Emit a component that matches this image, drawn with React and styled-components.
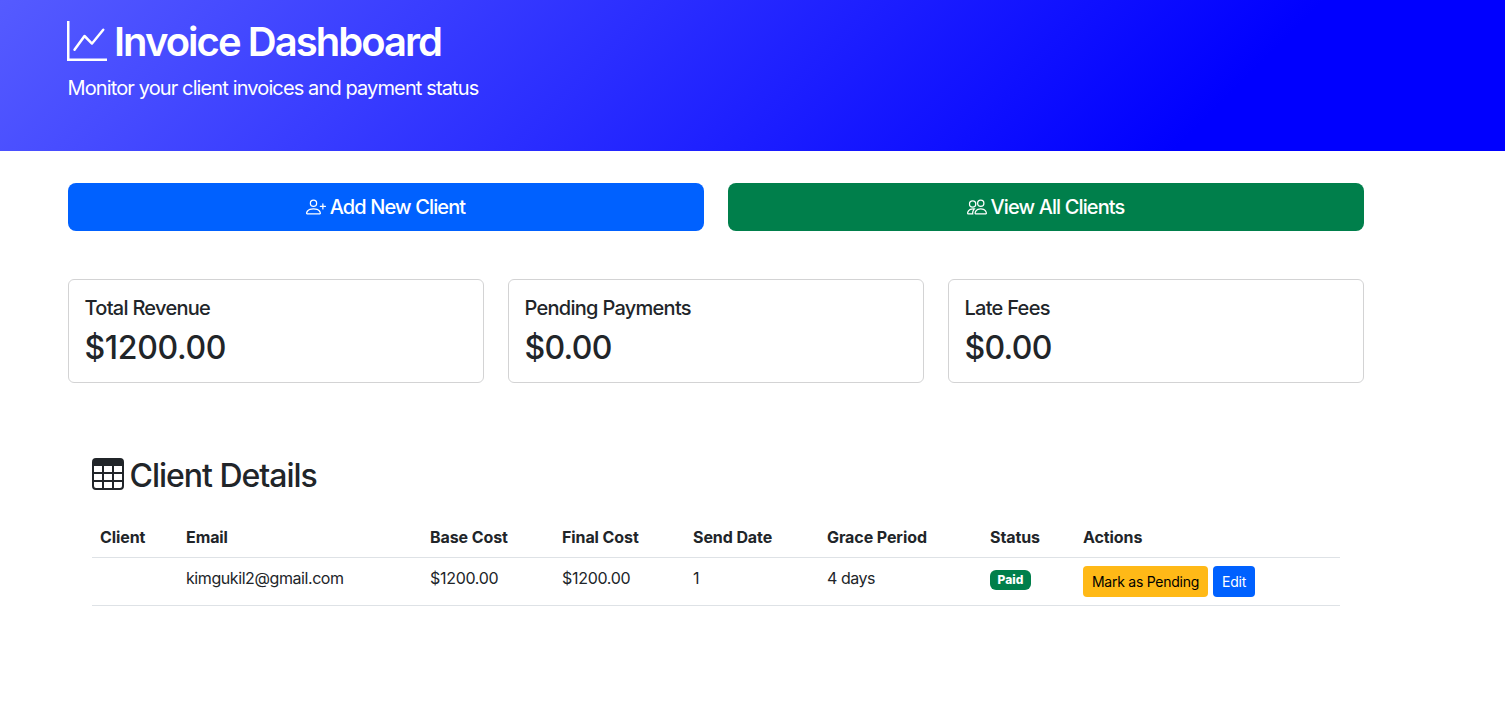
import React from "react";
import styled, { createGlobalStyle } from "styled-components";
import { BsGraphUp, BsPersonPlus, BsPeople, BsTable } from "react-icons/bs";

const GlobalStyle = createGlobalStyle`
  *, *::before, *::after { box-sizing: border-box; }
  body {
    margin: 0;
    background: #fff;
    color: #212529;
    font-family: Inter, "Liberation Sans", sans-serif;
    font-size: 16px;
    line-height: 1.5;
    overflow: hidden;
    font-kerning: normal;
  }
  h1, h2, h5, p { margin: 0; }
  svg { flex: none; }
`;

const Container = styled.div`
  width: 1296px;
  margin-left: 68px;
`;

const Header = styled.header`
  height: 151px;
  padding-top: 17px;
  color: #fff;
  background: linear-gradient(135deg, #555bff 0%, #0000ff 80%);
`;

const Title = styled.h1`
  display: flex;
  align-items: center;
  height: 48px;
  margin-bottom: 8px;
  font-size: 40px;
  font-weight: 570;
  letter-spacing: -1.97px;
  line-height: 48px;

  svg { margin: 0 7px 0 -1px; }
  span { padding-top: 2px; }
`;

const Lead = styled.p`
  margin-left: -0.5px;
  font-size: 20px;
  line-height: 30px;
  letter-spacing: -0.88px;
`;

const ButtonRow = styled.div`
  display: grid;
  grid-template-columns: 1fr 1fr;
  gap: 24px;
  margin-top: 32px;
`;

const LargeButton = styled.button`
  display: flex;
  align-items: center;
  justify-content: center;
  gap: 4px;
  height: 48px;
  padding: 0 1px 0 0;
  border: 0;
  border-radius: 8px;
  background: ${({ $color }) => $color};
  color: #fff;
  font: 550 20px/30px Inter, sans-serif;
  letter-spacing: -0.88px;
`;

const Cards = styled.div`
  display: grid;
  grid-template-columns: repeat(3, 1fr);
  gap: 24px;
  margin-top: 48px;
`;

const Card = styled.section`
  height: 104px;
  padding: 16px 16px 16px 15.5px;
  border: 1px solid #d3d3d4;
  border-radius: 6px;
`;

const CardTitle = styled.h5`
  margin-bottom: 9px;
  font-size: 20px;
  font-weight: 530;
  line-height: 24px;
  letter-spacing: -0.72px;
`;

const Amount = styled.h2`
  font-size: 32px;
  font-weight: 550;
  line-height: 38px;
  letter-spacing: ${({ $tracking }) => $tracking}px;
`;

const Details = styled.section`
  margin-top: 72px;
  padding: 0 24px;
`;

const DetailsTitle = styled.h2`
  display: flex;
  align-items: center;
  gap: 6px;
  height: 38px;
  margin: 0 0 24px -0.5px;
  font-size: 32px;
  font-weight: 550;
  line-height: 38px;
  letter-spacing: -1.02px;

  span { padding-top: 3px; }
`;

const Table = styled.table`
  width: 1248px;
  table-layout: fixed;
  border-collapse: separate;
  border-spacing: 0;
`;

const HeadCell = styled.th`
  height: 41px;
  padding: 8px;
  border-bottom: 1px solid #dee2e6;
  text-align: left;
  white-space: nowrap;
  font-weight: 700;
  line-height: 24px;
  letter-spacing: -0.09px;
`;

const Cell = styled.td`
  height: 48px;
  padding: 8px;
  border-bottom: 1px solid #dee2e6;
  vertical-align: top;
  white-space: nowrap;
  line-height: 24px;
  letter-spacing: ${({ $tracking = -0.3 }) => $tracking}px;
`;

const Badge = styled.span`
  display: block;
  width: 41px;
  height: 20px;
  margin-top: 4px;
  border-radius: 6px;
  background: #007f4b;
  color: #fff;
  font-size: 12px;
  font-weight: 800;
  line-height: 20px;
  text-align: center;
  letter-spacing: 0.1px;
`;

const Actions = styled.div`
  display: flex;
  gap: 5px;
`;

const SmallButton = styled.button`
  width: ${({ $width }) => $width}px;
  height: 31px;
  padding: 0;
  border: 0;
  border-radius: 4px;
  background: ${({ $color }) => $color};
  color: ${({ $text }) => $text};
  font: 420 14px/21px Inter, sans-serif;
  letter-spacing: -0.25px;
`;

const summaries = [
  { label: "Total Revenue", value: "$1200.00", amount: -0.33 },
  { label: "Pending Payments", value: "$0.00", amount: -0.7 },
  { label: "Late Fees", value: "$0.00", amount: -0.7 },
];

const columns = [
  ["Client", 86],
  ["Email", 244],
  ["Base Cost", 132],
  ["Final Cost", 131],
  ["Send Date", 134],
  ["Grace Period", 163],
  ["Status", 93],
  ["Actions", 265],
];

export default function App() {
  return (
    <>
      <GlobalStyle />
      <Header>
        <Container>
          <Title><BsGraphUp size={40} /><span>Invoice Dashboard</span></Title>
          <Lead>Monitor your client invoices and payment status</Lead>
        </Container>
      </Header>
      <Container as="main">
        <ButtonRow>
          <LargeButton $color="#0061ff"><BsPersonPlus size={20} />Add New Client</LargeButton>
          <LargeButton $color="#007f4b"><BsPeople size={20} />View All Clients</LargeButton>
        </ButtonRow>
        <Cards>
          {summaries.map((s) => (
            <Card key={s.label}>
              <CardTitle>{s.label}</CardTitle>
              <Amount $tracking={s.amount}>{s.value}</Amount>
            </Card>
          ))}
        </Cards>
        <Details>
          <DetailsTitle><BsTable size={32} /><span>Client Details</span></DetailsTitle>
          <Table>
            <colgroup>
              {columns.map(([name, width]) => <col key={name} width={width} />)}
            </colgroup>
            <thead>
              <tr>{columns.map(([name]) => <HeadCell key={name}>{name}</HeadCell>)}</tr>
            </thead>
            <tbody>
              <tr>
                <Cell />
                <Cell $tracking={-0.42}>kimgukil2@gmail.com</Cell>
                <Cell>$1200.00</Cell>
                <Cell>$1200.00</Cell>
                <Cell>1</Cell>
                <Cell $tracking={-0.48}>4 days</Cell>
                <Cell><Badge>Paid</Badge></Cell>
                <Cell>
                  <Actions>
                    <SmallButton $width={125} $color="#ffb917" $text="#000">Mark as Pending</SmallButton>
                    <SmallButton $width={42} $color="#0061ff" $text="#fff">Edit</SmallButton>
                  </Actions>
                </Cell>
              </tr>
            </tbody>
          </Table>
        </Details>
      </Container>
    </>
  );
}
